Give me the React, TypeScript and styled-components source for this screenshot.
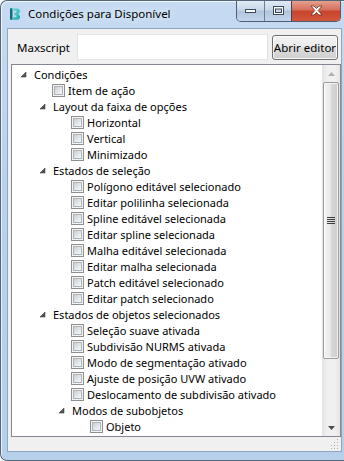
import React from 'react';
import styled, { createGlobalStyle } from 'styled-components';

const GlobalStyle = createGlobalStyle`
  html, body {
    margin: 0;
    padding: 0;
    background: #ffffff;
  }
  body {
    font-family: "Noto Sans", "DejaVu Sans", sans-serif;
    font-size: 11px;
  }
`;

type Node = {
  label: string;
  children?: Node[];
};

const tree: Node[] = [
  {
    label: 'Condições',
    children: [
      { label: 'Item de ação' },
      {
        label: 'Layout da faixa de opções',
        children: [{ label: 'Horizontal' }, { label: 'Vertical' }, { label: 'Minimizado' }],
      },
      {
        label: 'Estados de seleção',
        children: [
          { label: 'Polígono editável selecionado' },
          { label: 'Editar polilinha selecionada' },
          { label: 'Spline editável selecionada' },
          { label: 'Editar spline selecionada' },
          { label: 'Malha editável selecionada' },
          { label: 'Editar malha selecionada' },
          { label: 'Patch editável selecionado' },
          { label: 'Editar patch selecionado' },
        ],
      },
      {
        label: 'Estados de objetos selecionados',
        children: [
          { label: 'Seleção suave ativada' },
          { label: 'Subdivisão NURMS ativada' },
          { label: 'Modo de segmentação ativado' },
          { label: 'Ajuste de posição UVW ativado' },
          { label: 'Deslocamento de subdivisão ativado' },
          {
            label: 'Modos de subobjetos',
            children: [{ label: 'Objeto' }],
          },
        ],
      },
    ],
  },
];

const Window = styled.div`
  position: relative;
  width: 344px;
  height: 461px;
  box-sizing: border-box;
  border: 1px solid #55667a;
  border-right: none;
  border-radius: 7px 0 0 7px;
  background: linear-gradient(180deg, #c6dbf2 0%, #b9d1ec 40%, #b6cfea 100%);
  box-shadow: inset 1px 1px 0 rgba(255, 255, 255, 0.7);
  display: flex;
  flex-direction: column;
  overflow: hidden;
`;

const TitleBar = styled.div`
  height: 27px;
  display: flex;
  align-items: flex-start;
  padding-left: 6px;
  flex-shrink: 0;
`;

const AppIcon = styled.svg`
  width: 16px;
  height: 16px;
  margin-top: 5px;
  flex-shrink: 0;
`;

const Title = styled.div`
  margin-left: 5px;
  margin-top: 5px;
  color: #000;
  font-size: 11.5px;
  line-height: 16px;
  flex: 1;
  text-shadow: 0 0 6px rgba(255, 255, 255, 0.9);
`;

const Captions = styled.div`
  display: flex;
  margin-top: -1px;
  margin-right: 3px;
  border: 1px solid #4c5d71;
  border-top: none;
  border-radius: 0 0 5px 5px;
  overflow: hidden;
  height: 21px;
`;

const CaptionButton = styled.div<{ $close?: boolean }>`
  width: ${(p) => (p.$close ? '49px' : '27px')};
  height: 21px;
  display: flex;
  align-items: center;
  justify-content: center;
  box-sizing: border-box;
  border-left: ${(p) => (p.$close ? '1px solid #5a3a3a' : '1px solid #6d7f94')};
  background: ${(p) =>
    p.$close
      ? 'linear-gradient(180deg, #e8a493 0%, #d5735f 45%, #c6452f 55%, #d2563c 100%)'
      : 'linear-gradient(180deg, #e4edf7 0%, #c9d8ea 45%, #b1c5dd 55%, #c3d5ea 100%)'};
  &:first-child {
    border-left: none;
  }
`;

const Client = styled.div`
  flex: 1;
  margin: 0 2px 8px 6px;
  background: #f0f0f0;
  border: 1px solid #8fa6c0;
  display: flex;
  flex-direction: column;
  padding: 5px 0 0 3px;
  position: relative;
`;

const ScriptRow = styled.div`
  display: flex;
  align-items: center;
  height: 26px;
  margin-right: 3px;
`;

const Label = styled.span`
  width: 66px;
  padding-left: 6px;
  box-sizing: border-box;
  color: #000;
  font-size: 11.5px;
`;

const TextInput = styled.div`
  flex: 1;
  height: 26px;
  box-sizing: border-box;
  border: 1px solid #abadb3;
  border-top-color: #e3e9ef;
  border-left-color: #e2e3ea;
  border-right-color: #dbdfe6;
  border-bottom-color: #e3e9ef;
  background: #fff;
  margin-right: 4px;
`;

const Button = styled.div`
  width: 66px;
  height: 25px;
  box-sizing: border-box;
  border: 1px solid #707070;
  border-radius: 3px;
  background: linear-gradient(180deg, #f2f2f2 0%, #ebebeb 50%, #dddddd 50%, #cfcfcf 100%);
  box-shadow: inset 0 0 0 1px rgba(255, 255, 255, 0.8);
  display: flex;
  align-items: center;
  justify-content: center;
  color: #000;
  font-size: 11.5px;
  white-space: nowrap;
`;

const TreeBox = styled.div`
  margin-top: 4px;
  height: 373px;
  box-sizing: border-box;
  border: 1px solid #828790;
  background: #fff;
  display: flex;
  overflow: hidden;
`;

const TreeBody = styled.div`
  flex: 1;
  padding-top: 1px;
  overflow: hidden;
`;

const Row = styled.div<{ $level: number }>`
  display: flex;
  align-items: center;
  height: 16px;
  padding-left: ${(p) => 2 + p.$level * 19}px;
  white-space: nowrap;
  color: #000;
`;

const Expander = styled.div`
  width: 19px;
  height: 16px;
  flex-shrink: 0;
  display: flex;
  align-items: center;
  justify-content: center;
`;

const CheckBox = styled.div`
  width: 13px;
  height: 13px;
  box-sizing: border-box;
  border: 1px solid #8e8f8f;
  background: #f4f4f4;
  flex-shrink: 0;
  margin-right: 3px;
  &::after {
    content: '';
    display: block;
    margin: 1px;
    width: 9px;
    height: 9px;
    box-sizing: border-box;
    border: 1px solid #aeb3b9;
    background: linear-gradient(135deg, #cbcfd5 0%, #e6e8eb 60%, #f7f7f7 100%);
  }
`;

const HeaderText = styled.span`
  padding-left: 1px;
`;

const ScrollBar = styled.div`
  width: 18px;
  flex-shrink: 0;
  display: flex;
  flex-direction: column;
  background: linear-gradient(90deg, #e3e3e3 0%, #f0f0f0 30%, #f0f0f0 70%, #e6e6e6 100%);
`;

const ArrowBox = styled.div`
  height: 17px;
  display: flex;
  align-items: center;
  justify-content: center;
  flex-shrink: 0;
`;

const Thumb = styled.div`
  height: 277px;
  margin: 0 1px;
  box-sizing: border-box;
  border: 1px solid #9b9b9b;
  border-radius: 2px;
  background: linear-gradient(90deg, #f3f3f3 0%, #e8e8e8 45%, #d6d6d6 55%, #cfcfcf 100%);
  box-shadow: inset 0 0 0 1px rgba(255, 255, 255, 0.7);
  display: flex;
  align-items: center;
  justify-content: center;
`;

const Track = styled.div`
  flex: 1;
`;

const Grip = styled.svg`
  position: absolute;
  right: 2px;
  bottom: 2px;
`;

const Arrow = () => (
  <svg width="7" height="7" viewBox="0 0 7 7">
    <path d="M6 1 L6 6 L1 6 Z" fill="#595959" stroke="#262626" strokeWidth="0.5" />
  </svg>
);

const flatten = (nodes: Node[], level: number, out: { node: Node; level: number }[]) => {
  nodes.forEach((node) => {
    out.push({ node, level });
    if (node.children) flatten(node.children, level + 1, out);
  });
  return out;
};

const TreeRow: React.FC<{ node: Node; level: number }> = ({ node, level }) => (
  <Row $level={level}>
    <Expander>{node.children ? <Arrow /> : null}</Expander>
    {node.children ? (
      <HeaderText>{node.label}</HeaderText>
    ) : (
      <>
        <CheckBox />
        <span>{node.label}</span>
      </>
    )}
  </Row>
);

export default function App() {
  const rows = flatten(tree, 0, []);
  return (
    <>
      <GlobalStyle />
      <Window>
        <TitleBar>
          <AppIcon viewBox="0 0 16 16">
            <defs>
              <linearGradient id="ic" x1="0" y1="0" x2="1" y2="1">
                <stop offset="0" stopColor="#7fe0de" />
                <stop offset="1" stopColor="#1aa3a6" />
              </linearGradient>
            </defs>
            <path d="M3 2.5 L5.5 2 L5.5 14 L3 13.5 Z" fill="#0f6f74" />
            <path
              d="M5.5 2 L10.5 2.5 Q13.5 3.5 12.8 6 L11.3 8 L13 10 Q13.5 13.3 10.5 13.8 L5.5 14 L5.5 11.3 L9.3 11 L9.3 9.6 L7.3 9.2 L7.3 6.8 L9.3 6.4 L9.3 5 L5.5 4.7 Z"
              fill="url(#ic)"
            />
          </AppIcon>
          <Title>Condições para Disponível</Title>
          <Captions>
            <CaptionButton>
              <svg width="11" height="4" viewBox="0 0 11 4">
                <rect x="0.5" y="0.5" width="10" height="3" fill="#fff" stroke="#3b4a5c" />
              </svg>
            </CaptionButton>
            <CaptionButton>
              <svg width="11" height="9" viewBox="0 0 11 9">
                <rect x="0.5" y="0.5" width="10" height="8" fill="#fff" stroke="#3b4a5c" />
                <rect x="2.5" y="3" width="6" height="3.5" fill="#c9d8ea" stroke="#3b4a5c" />
              </svg>
            </CaptionButton>
            <CaptionButton $close>
              <svg width="13" height="11" viewBox="0 0 13 11">
                <path
                  d="M1 1 L4 1 L6.5 3.5 L9 1 L12 1 L8.2 5.5 L12 10 L9 10 L6.5 7.5 L4 10 L1 10 L4.8 5.5 Z"
                  fill="#fff"
                  stroke="#6b2b22"
                  strokeWidth="0.8"
                />
              </svg>
            </CaptionButton>
          </Captions>
        </TitleBar>
        <Client>
          <ScriptRow>
            <Label>Maxscript</Label>
            <TextInput />
            <Button>Abrir editor</Button>
          </ScriptRow>
          <TreeBox>
            <TreeBody>
              {rows.map((r, i) => (
                <TreeRow key={i} node={r.node} level={r.level} />
              ))}
            </TreeBody>
            <ScrollBar>
              <ArrowBox>
                <svg width="7" height="4" viewBox="0 0 7 4">
                  <path d="M0 4 L3.5 0 L7 4 Z" fill="#b0b0b0" />
                </svg>
              </ArrowBox>
              <Thumb>
                <svg width="8" height="7" viewBox="0 0 8 7">
                  <rect x="0" y="0" width="8" height="1" fill="#3a3a3a" />
                  <rect x="0" y="2" width="8" height="1" fill="#3a3a3a" />
                  <rect x="0" y="4" width="8" height="1" fill="#3a3a3a" />
                  <rect x="0" y="6" width="8" height="1" fill="#3a3a3a" />
                </svg>
              </Thumb>
              <Track />
              <ArrowBox>
                <svg width="7" height="4" viewBox="0 0 7 4">
                  <path d="M0 0 L7 0 L3.5 4 Z" fill="#4d4d4d" />
                </svg>
              </ArrowBox>
            </ScrollBar>
          </TreeBox>
          <Grip width="10" height="10" viewBox="0 0 10 10">
            {[
              [8, 0],
              [8, 3],
              [5, 3],
              [8, 6],
              [5, 6],
              [2, 6],
              [8, 9],
              [5, 9],
              [2, 9],
            ].map(([x, y], i) => (
              <rect key={i} x={x} y={y} width="1" height="1" fill="#a6b3c2" />
            ))}
          </Grip>
        </Client>
      </Window>
    </>
  );
}
